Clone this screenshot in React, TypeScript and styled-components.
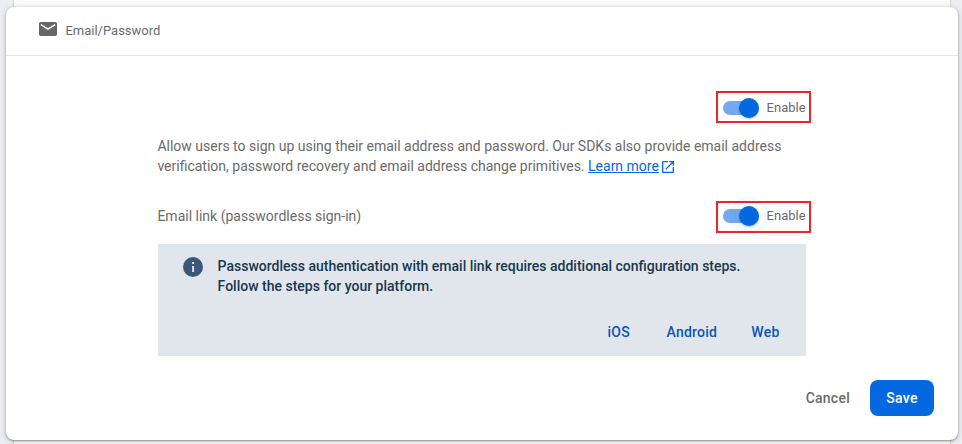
import React from "react";
import styled, { createGlobalStyle } from "styled-components";

const GlobalStyle = createGlobalStyle`
  * { box-sizing: border-box; }
  body {
    margin: 0;
    overflow: hidden;
    background: #eceff1;
    font-family: Roboto, "Liberation Sans", sans-serif;
    color: #6b6b6b;
  }
`;

const Page = styled.div`
  height: 444px;
  overflow: hidden;
  padding: 0 11px 0 13px;
  background: #eceef1;
`;

const Backdrop = styled.div`
  height: 460px;
  padding-top: 7px;
  background: #fafafa;
  border: solid #cfd1d3;
  border-width: 0 1px;
`;

const Card = styled.section`
  display: flex;
  flex-direction: column;
  height: 433px;
  margin: 0 -8px;
  background: #fff;
  border-radius: 8px;
  box-shadow: 0 1px 2px rgba(0, 0, 0, 0.34), 0 1px 5px 1px rgba(0, 0, 0, 0.14);
`;

const Header = styled.header`
  display: flex;
  align-items: center;
  gap: 8.4px;
  height: 49px;
  padding: 0 33px 1px;
  border-bottom: 1px solid #e4e4e4;
  font-size: 13px;
  line-height: 16px;
`;

const MailIcon = styled.svg`
  width: 18px;
  height: 14px;
  margin-top: -3px;
`;

const Body = styled.main`
  width: 654px;
  margin: 35px 0 0 151px;
  font-size: 14px;
  line-height: 20px;
`;

const Row = styled.div`
  display: flex;
  align-items: center;
  justify-content: space-between;
`;

const RowLabel = styled.span`
  margin: -2px 0 0 0.4px;
`;

const ToggleFrame = styled.label<{ $focused?: boolean }>`
  display: flex;
  align-items: center;
  gap: 7.6px;
  width: 95px;
  height: 32px;
  margin-left: auto;
  padding: ${(p) => (p.$focused ? "0 0 3px 5px" : "2px 0 0 5px")};
  border: 2px solid #f42222;
  font-size: 13px;
  line-height: 16px;
`;

const Track = styled.span`
  display: flex;
  align-items: center;
  width: 36px;
  height: 14px;
  border-radius: 7px;
  background: linear-gradient(90deg, #73a9ee 28px, transparent 28px);
`;

const Thumb = styled.span<{ $focused?: boolean }>`
  width: 20px;
  height: 20px;
  margin-left: 16px;
  flex: none;
  border-radius: 50%;
  background: #0468e0;
  box-shadow: 0 1px 2px rgba(0, 0, 0, 0.28)
    ${(p) => (p.$focused ? ", 0 0 0 9.5px rgba(26, 140, 250, 0.045)" : "")};
`;

const Description = styled.p`
  margin: 13px 0 25px 0.4px;
  white-space: nowrap;
`;

const LearnMore = styled.a`
  color: #0468e0;
  text-decoration: underline;
`;

const ExternalIcon = styled.svg`
  width: 12px;
  height: 12px;
  margin-left: 3px;
  vertical-align: -2px;
`;

const Notice = styled.aside`
  display: flex;
  flex-direction: column;
  justify-content: space-between;
  width: 648px;
  height: 112px;
  margin: 11px 0 0 1px;
  padding: 12px 26.5px 14px 25.4px;
  background: #e1e6ed;
`;

const Message = styled.div`
  display: flex;
  gap: 14.2px;
  color: #18384f;
  font-weight: 500;
`;

const InfoIcon = styled.svg`
  width: 20px;
  height: 20px;
  margin-top: 1px;
`;

const Platforms = styled.nav`
  display: flex;
  justify-content: flex-end;
  gap: 34px;
`;

const PlatformLink = styled.a`
  color: #0b55b5;
  font-weight: 500;
  letter-spacing: 0.25px;

  &:first-child {
    margin-right: 2.5px;
  }
`;

const Footer = styled.footer`
  display: flex;
  align-items: center;
  justify-content: flex-end;
  margin-top: 24px;
  padding-right: 24px;
`;

const Button = styled.button<{ $primary?: boolean }>`
  width: ${(p) => (p.$primary ? "64px" : "auto")};
  height: 36px;
  padding: 0 ${(p) => (p.$primary ? "0" : "16px")};
  margin-left: 4px;
  border: 0;
  border-radius: 8px;
  font: 500 14px/20px Roboto, sans-serif;
  letter-spacing: 0.25px;
  color: ${(p) => (p.$primary ? "#fff" : "#6b6b6b")};
  background: ${(p) => (p.$primary ? "#0468e0" : "transparent")};
`;

function Toggle({ focused }: { focused?: boolean }) {
  return (
    <ToggleFrame $focused={focused}>
      <Track>
        <Thumb $focused={focused} />
      </Track>
      Enable
    </ToggleFrame>
  );
}

export default function App() {
  return (
    <Page>
      <GlobalStyle />
      <Backdrop>
        <Card>
          <Header>
            <MailIcon viewBox="2 4 20 16" preserveAspectRatio="none">
              <path
                fill="#666"
                d="M20 4H4c-1.1 0-1.99.9-1.99 2L2 18c0 1.1.9 2 2 2h16c1.1 0 2-.9 2-2V6c0-1.1-.9-2-2-2zm0 4l-8 5-8-5V6l8 5 8-5v2z"
              />
            </MailIcon>
            Email/Password
          </Header>
          <Body>
            <Row>
              <Toggle />
            </Row>
            <Description>
              Allow users to sign up using their email address and password. Our SDKs also provide email address
              <br />
              verification, password recovery and email address change primitives.{" "}
              <LearnMore>Learn more</LearnMore>
              <ExternalIcon viewBox="3 3 18 18">
                <path
                  fill="#0468e0"
                  d="M19 19H5V5h7V3H5c-1.11 0-2 .9-2 2v14c0 1.1.89 2 2 2h14c1.1 0 2-.9 2-2v-7h-2v7zM14 3v2h3.59l-9.83 9.83 1.41 1.41L19 6.41V10h2V3h-7z"
                />
              </ExternalIcon>
            </Description>
            <Row>
              <RowLabel>Email link (passwordless sign-in)</RowLabel>
              <Toggle focused />
            </Row>
            <Notice>
              <Message>
                <InfoIcon viewBox="2 2 20 20">
                  <circle cx="12" cy="12" r="10" fill="#3c5878" />
                  <path fill="#d9e0e9" d="M11.1 7h2v2h-2zM11.1 11h2v6h-2z" />
                </InfoIcon>
                <span>
                  Passwordless authentication with email link requires additional configuration steps.
                  <br />
                  Follow the steps for your platform.
                </span>
              </Message>
              <Platforms>
                <PlatformLink>iOS</PlatformLink>
                <PlatformLink>Android</PlatformLink>
                <PlatformLink>Web</PlatformLink>
              </Platforms>
            </Notice>
          </Body>
          <Footer>
            <Button>Cancel</Button>
            <Button $primary>Save</Button>
          </Footer>
        </Card>
      </Backdrop>
    </Page>
  );
}
